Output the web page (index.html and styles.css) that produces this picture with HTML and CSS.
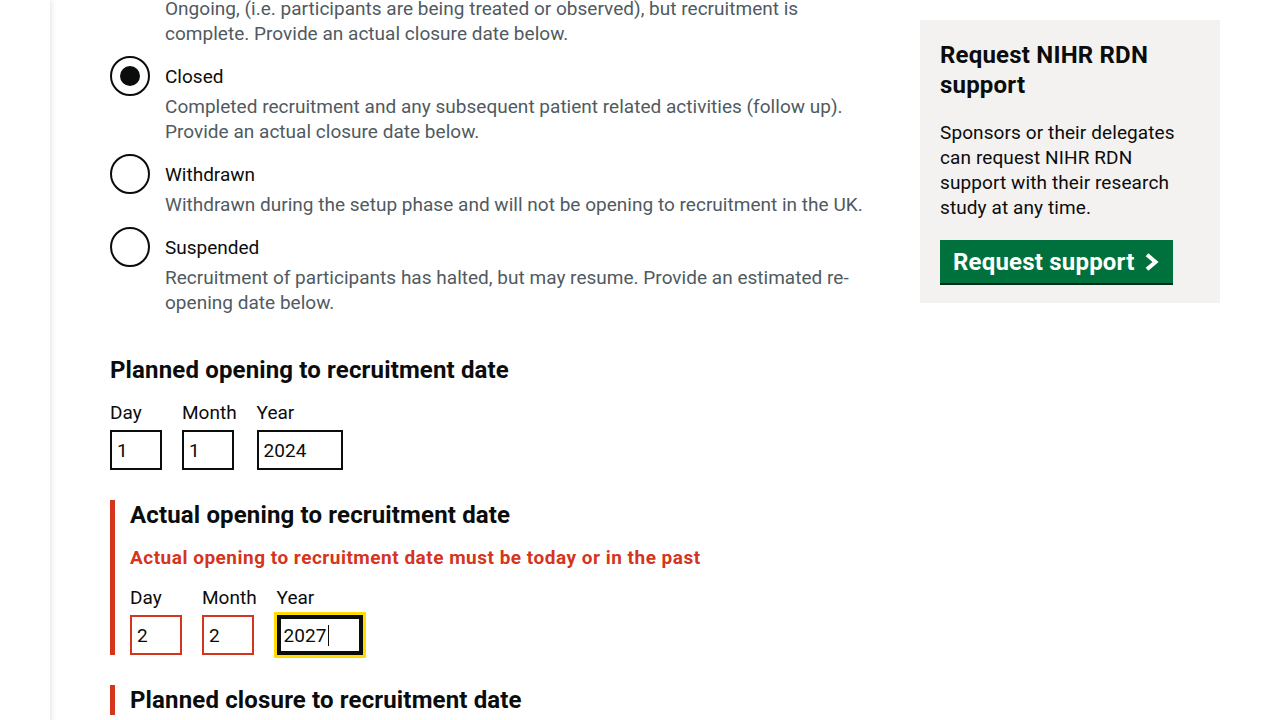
FILE: index.html
```html
<!DOCTYPE html>
<html lang="en">
<head>
<meta charset="utf-8">
<title>Update study status</title>
<link rel="stylesheet" href="styles.css">
</head>
<body>
<div class="shell">
  <div class="rail"></div>
  <div class="container">
    <div class="layout">
      <main class="main">
        <div class="radios">
          <div class="radio-item">
            <span class="radio-circle"></span>
            <div class="radio-text">
              <div class="radio-label">Closed - in follow up</div>
              <div class="radio-hint">Ongoing, (i.e. participants are being treated or observed), but recruitment is complete. Provide an actual closure date below.</div>
            </div>
          </div>
          <div class="radio-item">
            <span class="radio-circle is-checked"></span>
            <div class="radio-text">
              <div class="radio-label">Closed</div>
              <div class="radio-hint">Completed recruitment and any subsequent patient related activities (follow up). Provide an actual closure date below.</div>
            </div>
          </div>
          <div class="radio-item">
            <span class="radio-circle"></span>
            <div class="radio-text">
              <div class="radio-label">Withdrawn</div>
              <div class="radio-hint">Withdrawn during the setup phase and will not be opening to recruitment in the UK.</div>
            </div>
          </div>
          <div class="radio-item">
            <span class="radio-circle"></span>
            <div class="radio-text">
              <div class="radio-label">Suspended</div>
              <div class="radio-hint">Recruitment of participants has halted, but may resume. Provide an estimated re-opening date below.</div>
            </div>
          </div>
        </div>

        <div class="form-group">
          <h2 class="legend">Planned opening to recruitment date</h2>
          <div class="date-input">
            <div class="date-item">
              <label class="label">Day</label>
              <input class="input w2" type="text" value="1">
            </div>
            <div class="date-item">
              <label class="label">Month</label>
              <input class="input w2" type="text" value="1">
            </div>
            <div class="date-item">
              <label class="label">Year</label>
              <input class="input w4" type="text" value="2024">
            </div>
          </div>
        </div>

        <div class="form-group form-group--error">
          <h2 class="legend">Actual opening to recruitment date</h2>
          <p class="error-message">Actual opening to recruitment date must be today or in the past</p>
          <div class="date-input">
            <div class="date-item">
              <label class="label">Day</label>
              <input class="input w2 input--error" type="text" value="2">
            </div>
            <div class="date-item">
              <label class="label">Month</label>
              <input class="input w2 input--error" type="text" value="2">
            </div>
            <div class="date-item">
              <label class="label">Year</label>
              <span class="input-wrap">
                <input class="input w4 input--focus" type="text" value="2027">
                <span class="caret"></span>
              </span>
            </div>
          </div>
        </div>

        <div class="form-group form-group--error">
          <h2 class="legend">Planned closure to recruitment date</h2>
        </div>
      </main>

      <aside class="side">
        <div class="side-box">
          <h2 class="side-title">Request NIHR RDN support</h2>
          <p class="side-body">Sponsors or their delegates can request NIHR RDN support with their research study at any time.</p>
          <a class="button" href="#">Request support
            <svg class="chev" width="16" height="18" viewBox="0 0 16 18" aria-hidden="true"><polyline points="3,1.8 11.5,9 3,16.2" fill="none" stroke="#ffffff" stroke-width="4" stroke-linejoin="miter" stroke-linecap="butt"/></svg>
          </a>
        </div>
      </aside>
    </div>
  </div>
</div>
</body>
</html>
```

FILE: styles.css
```css
* { box-sizing: border-box; }

html, body {
  margin: 0;
  padding: 0;
  background: #ffffff;
  height: 100%;
  overflow: hidden;
}

body {
  font-family: Roboto, "Liberation Sans", Arial, sans-serif;
  color: #0b0c0c;
  font-size: 19px;
  line-height: 25px;
}

.shell {
  display: flex;
  min-height: 720px;
}

.rail {
  flex: 0 0 50px;
  background: #ffffff;
  position: relative;
  z-index: 1;
  box-shadow: 2px 0 5px rgba(0, 0, 0, 0.09);
}

.container {
  flex: 1;
  padding: 20px 60px 0 60px;
}

.layout {
  display: grid;
  grid-template-columns: 1fr 300px;
  column-gap: 30px;
  align-items: start;
}

.main {
  margin-top: -62px;
}

/* radios */
.radios {
  display: flex;
  flex-direction: column;
  gap: 10px;
  margin-bottom: 40px;
}

.radio-item {
  display: flex;
  align-items: flex-start;
}

.radio-circle {
  flex: 0 0 40px;
  width: 40px;
  height: 40px;
  border: 2px solid #0b0c0c;
  border-radius: 50%;
  position: relative;
}

.radio-circle.is-checked::after {
  content: "";
  position: absolute;
  left: 8px;
  top: 8px;
  width: 20px;
  height: 20px;
  border-radius: 50%;
  background: #0b0c0c;
}

.radio-text {
  padding: 0 15px;
}

.radio-label {
  padding: 8px 0 5px;
}

.radio-hint {
  color: #505a5f;
  letter-spacing: 0.02px;
}

/* date groups */
.form-group {
  margin-bottom: 30px;
}

.form-group--error {
  border-left: 5px solid #d4351c;
  padding-left: 15px;
}

.legend {
  margin: 0 0 15px;
  font-size: 24px;
  line-height: 30px;
  font-weight: 700;
  letter-spacing: 0.15px;
}

.error-message {
  margin: 0 0 15px;
  color: #d4351c;
  font-weight: 700;
  letter-spacing: 0.5px;
}

.date-input {
  display: flex;
  gap: 20px;
}

.date-item {
  display: flex;
  flex-direction: column;
  align-items: flex-start;
}

.label {
  display: block;
  margin-bottom: 5px;
}

.input {
  height: 40px;
  margin: 0;
  padding: 5px;
  border: 2px solid #0b0c0c;
  border-radius: 0;
  font-family: inherit;
  font-size: 19px;
  line-height: 25px;
  color: #0b0c0c;
  background: #ffffff;
  outline: none;
}

.w2 { width: 52px; }
.w4 { width: 86px; }

.input--error {
  border-color: #d4351c;
}

.input--focus {
  outline: 3px solid #ffdd00;
  outline-offset: 0;
  box-shadow: inset 0 0 0 2px #0b0c0c;
}

.input-wrap {
  position: relative;
  display: block;
}

.caret {
  position: absolute;
  left: 51px;
  top: 10px;
  width: 1px;
  height: 21px;
  background: #0b0c0c;
}

/* sidebar */
.side-box {
  background: #f3f2f1;
  padding: 20px;
}

.side-title {
  margin: 0 0 20px;
  font-size: 24px;
  line-height: 30px;
  font-weight: 700;
  letter-spacing: 0.2px;
  padding-right: 30px;
}

.side-body {
  margin: 0 0 20px;
  letter-spacing: 0.1px;
}

.button {
  display: inline-flex;
  align-items: center;
  gap: 9px;
  height: 43px;
  padding: 0 13px 0 13px;
  background: #00703c;
  color: #ffffff;
  font-size: 24px;
  font-weight: 700;
  line-height: 30px;
  letter-spacing: 0.2px;
  text-decoration: none;
  box-shadow: 0 2px 0 #002d18;
}

.chev {
  display: block;
}
```
